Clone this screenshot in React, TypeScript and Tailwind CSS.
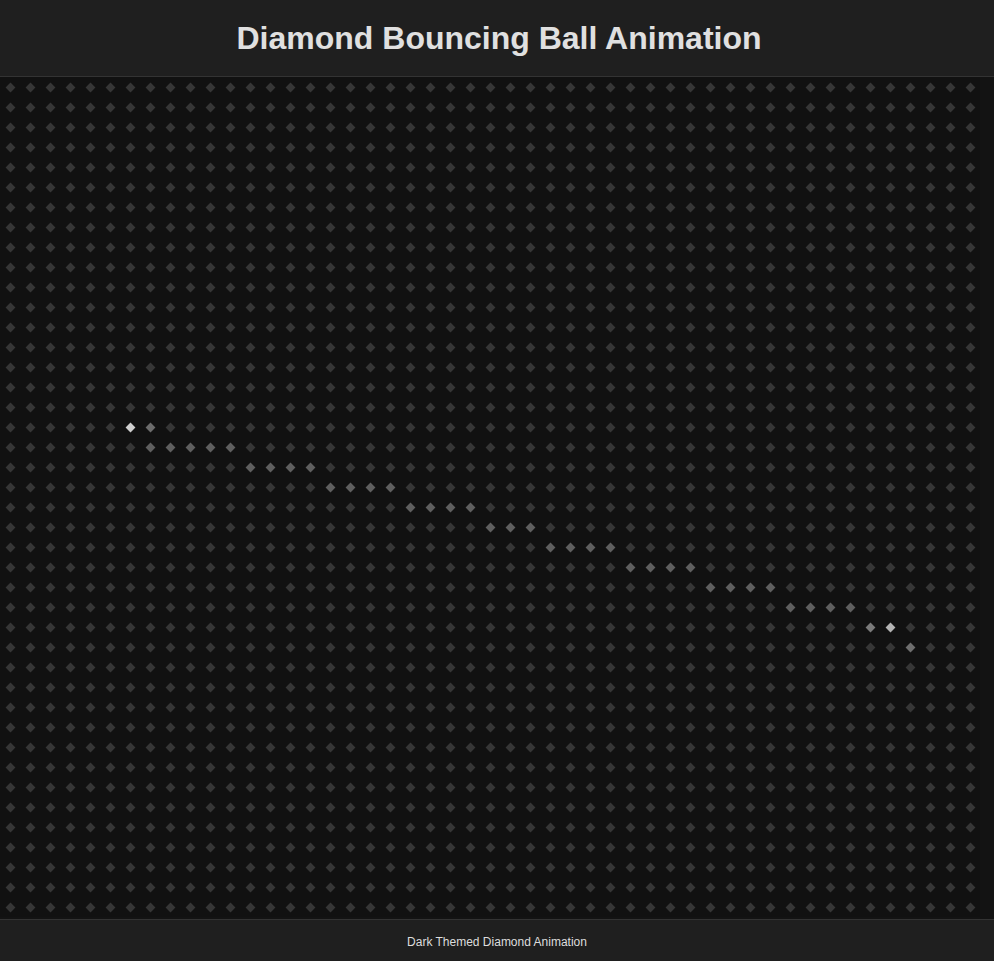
import React from "react";

const ROWS = 42;
const COLS = 49;

// cells lit by the ball's trail, keyed "row,col"
const trail: Record<string, string> = {};
const segments: [number, number, number][] = [
  [18, 7, 11],
  [19, 12, 15],
  [20, 16, 19],
  [21, 20, 23],
  [22, 24, 26],
  [23, 27, 30],
  [24, 31, 34],
  [25, 35, 38],
  [26, 39, 42],
];
segments.forEach(([r, from, to]) => {
  for (let c = from; c <= to; c++) trail[`${r},${c}`] = "#5f5f5f";
});
trail["17,6"] = "#cfcfcf";
trail["17,7"] = "#6c6c6c";
trail["27,43"] = "#7a7a7a";
trail["27,44"] = "#b4b4b4";
trail["28,45"] = "#6e6e6e";

const Diamond = ({ color }: { color: string }) => (
  <div className="w-[20px] h-[20px] flex items-center justify-center">
    <div className="w-[7px] h-[7px] rotate-45" style={{ backgroundColor: color }} />
  </div>
);

export default function App() {
  const cells = [];
  for (let r = 0; r < ROWS; r++) {
    for (let c = 0; c < COLS; c++) {
      cells.push(<Diamond key={`${r}-${c}`} color={trail[`${r},${c}`] ?? "#363636"} />);
    }
  }

  return (
    <div className="min-h-[961px] flex flex-col bg-[#131313] font-['Liberation_Sans',Arial,sans-serif]">
      <header className="h-[77px] flex items-center justify-center bg-[#1f1f1f] border-b border-[#333333]">
        <h1 className="text-[32px] font-bold text-[#e0e0e0] leading-none pl-[4px]">
          Diamond Bouncing Ball Animation
        </h1>
      </header>

      <main className="flex-1 pb-[2px]">
        <div className="w-[980px] flex flex-wrap bg-[#111111]">{cells}</div>
      </main>

      <footer className="h-[42px] flex items-center justify-center bg-[#1f1f1f] border-t border-[#333333]">
        <p className="text-[12px] text-[#dddddd] pt-[2px]">Dark Themed Diamond Animation</p>
      </footer>
    </div>
  );
}
